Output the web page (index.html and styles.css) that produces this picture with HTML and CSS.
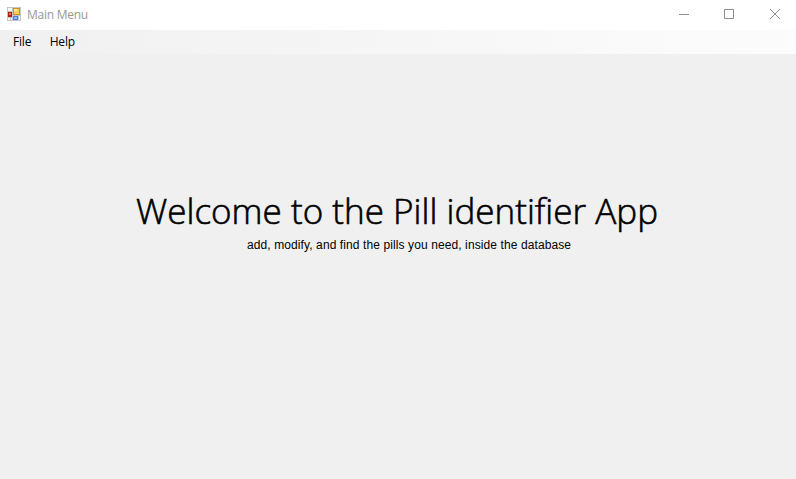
FILE: index.html
```html
<!DOCTYPE html>
<html lang="en">
<head>
<meta charset="utf-8">
<title>Main Menu</title>
<link rel="stylesheet" href="styles.css">
</head>
<body>
<header class="titlebar">
<svg class="app-icon" width="14" height="14" viewBox="0 0 14 14" shape-rendering="crispEdges">
<path fill="#c4c4c4" d="M0 0h14v14H0z"/>
<path fill="#f7f7f7" d="M1 1h4v3H1zM1 11h2v2H1zM4 11h1v2H4zM12 9h1v4h-1z"/>
<path fill="#c8961d" d="M6 1h7v7H6z"/>
<path fill="#fbd05a" d="M7 2h5v5H7z"/>
<path fill="#ffe99a" d="M7 2h3v2H7z"/>
<path fill="#b01c12" d="M1 5h4v5H1z"/>
<path fill="#e8705c" d="M2 6h2v2H2z"/>
<path fill="#4a80d6" d="M6 9h5v4H6z"/>
<path fill="#8fbcf7" d="M7 10h3v2H7z"/>
</svg>
<span class="title">Main Menu</span>
<div class="controls">
<svg width="46" height="30"><path d="M19 14.500h10"/></svg>
<svg width="46" height="30"><path d="M18.500 9.500h9v9h-9z"/></svg>
<svg width="46" height="30"><path d="M18 9l10 10M28 9l-10 10"/></svg>
</div>
</header>
<nav class="menubar"><span>File</span><span>Help</span></nav>
<main class="content">
<h1>Welcome to the Pill identifier App</h1>
<p>add, modify, and find the pills you need, inside the database</p>
</main>
</body>
</html>
```
FILE: styles.css
```css
body { margin: 0; height: 479px; overflow: hidden; background: #f0f0f0; color: #000; font-family: "Open Sans", "Noto Sans", sans-serif; display: flex; flex-direction: column; }
svg { display: block; }
.titlebar { box-sizing: border-box; height: 30px; flex: none; background: #fff; display: flex; align-items: center; padding-left: 7px; }
.app-icon { margin-top: -2px; }
.title { margin: -2px 0 0 6px; font-size: 12px; letter-spacing: -0.25px; color: #999; }
.controls { margin-left: auto; margin-right: -2px; display: flex; }
.controls path { fill: none; stroke: #8c8c8c; stroke-width: 1; }
.menubar { box-sizing: border-box; height: 24px; flex: none; display: flex; align-items: center; padding: 0 0 2px 13px; gap: 18.500px; font-size: 12px; letter-spacing: -0.2px; background: linear-gradient(90deg, #f0f0f0, #fcfcfc); }
.content { flex: 1; padding-top: 132px; white-space: nowrap; }
h1 { margin: 0 0 0 136px; font-size: 35px; line-height: 50px; font-weight: 300; letter-spacing: 0.02px; -webkit-text-stroke: 0.6px #000; }
p { margin: 0 0 0 247px; font-family: "Liberation Sans", Arial, sans-serif; font-size: 12px; line-height: 18px; letter-spacing: 0.1px; }
```
